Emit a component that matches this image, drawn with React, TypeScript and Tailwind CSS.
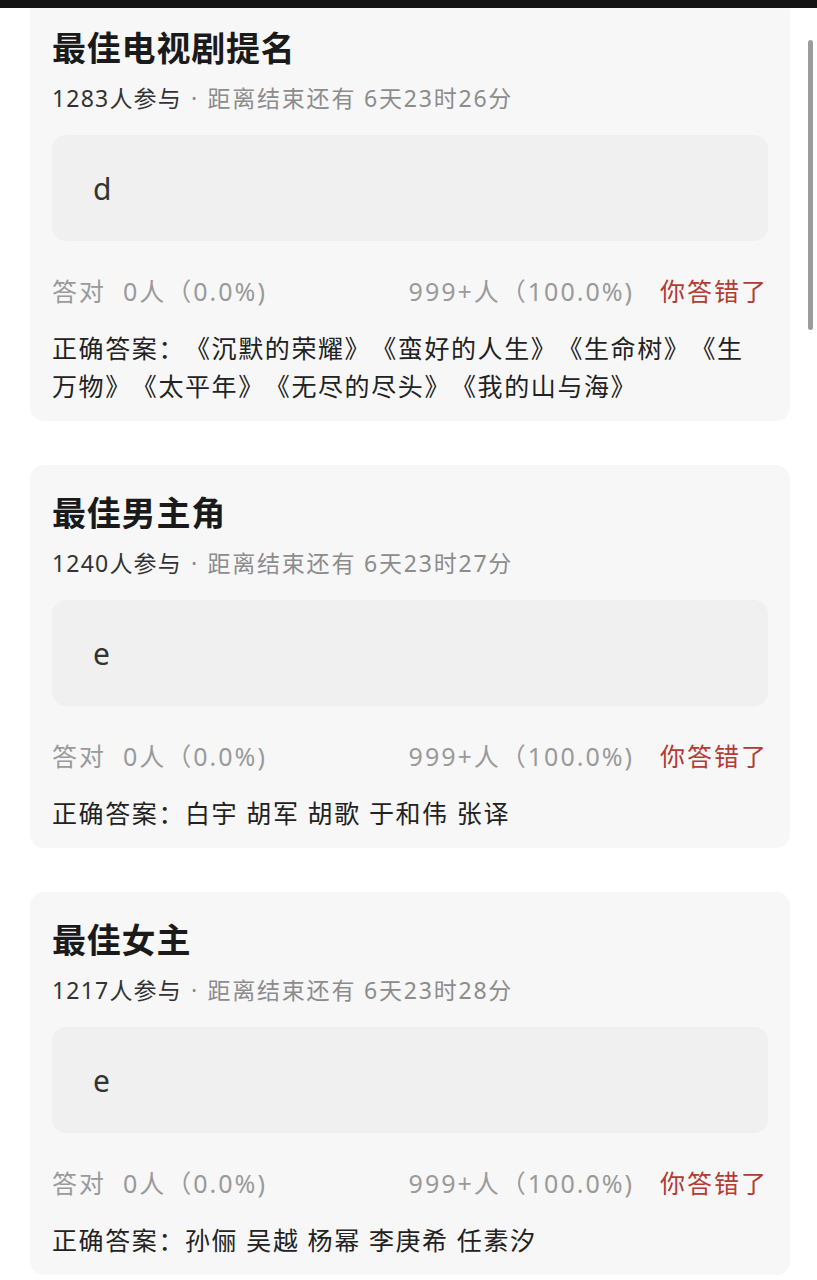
import React from 'react';

type Quiz = {
  title: string;
  joined: string;
  remain: string;
  answer: string;
  correct: string;
};

const quizzes: Quiz[] = [
  {
    title: '最佳电视剧提名',
    joined: '1283人参与',
    remain: '距离结束还有 6天23时26分',
    answer: 'd',
    correct: '《沉默的荣耀》《蛮好的人生》《生命树》《生万物》《太平年》《无尽的尽头》《我的山与海》',
  },
  {
    title: '最佳男主角',
    joined: '1240人参与',
    remain: '距离结束还有 6天23时27分',
    answer: 'e',
    correct: '白宇 胡军 胡歌 于和伟 张译',
  },
  {
    title: '最佳女主',
    joined: '1217人参与',
    remain: '距离结束还有 6天23时28分',
    answer: 'e',
    correct: '孙俪 吴越 杨幂 李庚希 任素汐',
  },
];

const font = { fontFamily: '"Noto Sans", "Noto Sans CJK SC", sans-serif' };

function QuizCard({ q }: { q: Quiz }) {
  return (
    <div className="bg-[#f7f7f7] rounded-[14px] px-[22px] pt-[28px] pb-[16px]">
      <h2 className="text-[34px] leading-[40px] font-bold text-[#1a1a1a] tracking-[0.8px]">{q.title}</h2>
      <p className="mt-[15px] text-[23px] leading-[30px] text-[#8c8c8c] tracking-[1.2px] flex items-center">
        <span className="text-[#333]">{q.joined}</span>
        <span className="mx-[9px]">·</span>
        <span className="tracking-[1.8px]">{q.remain}</span>
      </p>

      {/* 我的答案 */}
      <div className="mt-[22px] h-[106px] bg-[#f0f0f0] rounded-[14px] flex items-center pl-[41px]">
        <span className="text-[30px] text-[#333]">{q.answer}</span>
      </div>

      <div className="mt-[32px] flex items-center text-[25px] leading-[36px] text-[#9a9a9a] tracking-[2px] [text-spacing-trim:space-all]">
        <span>答对&nbsp;&nbsp;0人（0.0%)</span>
        <span className="ml-auto">999+人（100.0%)</span>
        <span className="ml-[26px] text-[#b23b34]">你答错了</span>
      </div>

      <p className="mt-[20px] text-[25px] leading-[38px] text-[#222] tracking-[1.6px] pr-[4px] [text-spacing-trim:space-all]">
        正确答案：{q.correct}
      </p>
    </div>
  );
}

export default function App() {
  return (
    <div className="relative w-[817px] h-[1280px] overflow-hidden bg-white" style={font}>
      <div className="absolute top-0 left-0 right-0 h-[8px] bg-[#141414] z-10" />
      <div className="absolute right-[4px] top-[40px] w-[5px] h-[290px] rounded-full bg-[#9c9c9c] z-10" />

      <div className="flex flex-col gap-[44px] pl-[30px] pr-[27px]">
        {quizzes.map((q) => (
          <QuizCard key={q.title} q={q} />
        ))}
      </div>
    </div>
  );
}
